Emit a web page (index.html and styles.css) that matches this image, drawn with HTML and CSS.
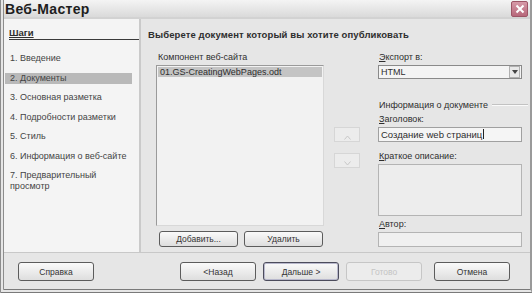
FILE: index.html
```html
<!DOCTYPE html>
<html lang="ru">
<head>
    <meta charset="UTF-8">
    <title>Веб-Мастер</title>
    <link rel="stylesheet" href="styles.css">
</head>
<body>
    <div class="window">
        <div class="titlebar">
            <span class="title">Веб-Мастер</span>
            <span class="close">
                <svg width="10" height="10" viewBox="0 0 10 10"><path d="M1.5 1.5 L8.5 8.5 M8.5 1.5 L1.5 8.5" stroke="#fff" stroke-width="2"/></svg>
            </span>
        </div>

        <div class="main">
            <div class="steps">
                <div class="steps-title"><u>Шаги</u></div>
                <ul class="step-list">
                    <li>1. Введение</li>
                    <li class="active">2. Документы</li>
                    <li>3. Основная разметка</li>
                    <li>4. Подробности разметки</li>
                    <li>5. Стиль</li>
                    <li>6. Информация о веб-сайте</li>
                    <li class="two-line">7. Предварительный<br>просмотр</li>
                </ul>
            </div>

            <div class="content">
                <div class="heading">Выберете документ который вы хотите опубликовать</div>

                <div class="columns">
                    <div class="col-list">
                        <div class="label">Компонент веб-сайта</div>
                        <div class="listbox">
                            <div class="list-item selected">01.GS-CreatingWebPages.odt</div>
                        </div>
                        <div class="list-buttons">
                            <button class="btn">Добавить...</button>
                            <button class="btn">Удалить</button>
                        </div>
                    </div>

                    <div class="col-arrows">
                        <button class="arrow">
                            <svg width="7" height="5" viewBox="0 0 7 5"><path d="M0.5 4.5 L3.5 1 L6.5 4.5" fill="none" stroke="#c8c8c8"/></svg>
                        </button>
                        <button class="arrow">
                            <svg width="7" height="5" viewBox="0 0 7 5"><path d="M0.5 0.5 L3.5 4 L6.5 0.5" fill="none" stroke="#c8c8c8"/></svg>
                        </button>
                    </div>

                    <div class="col-form">
                        <div class="label"><u>Э</u>кспорт в:</div>
                        <div class="select">
                            <span>HTML</span>
                            <span class="select-btn">
                                <svg width="6" height="4" viewBox="0 0 6 4"><path d="M0 0 L6 0 L3 4 Z" fill="#444"/></svg>
                            </span>
                        </div>

                        <div class="group-title"><span>Информация о документе</span></div>

                        <div class="label"><u>З</u>аголовок:</div>
                        <div class="input">Создание web страниц<span class="caret"></span></div>

                        <div class="label"><u>К</u>раткое описание:</div>
                        <div class="textarea"></div>

                        <div class="label"><u>А</u>втор:</div>
                        <div class="input author"></div>
                    </div>
                </div>
            </div>
        </div>

        <div class="footer">
            <button class="btn wide">Справка</button>
            <div class="nav">
                <button class="btn wide">&lt;Назад</button>
                <button class="btn wide default">Дальше &gt;</button>
                <button class="btn wide" disabled>Готово</button>
                <button class="btn wide cancel">Отмена</button>
            </div>
        </div>
    </div>
</body>
</html>
```

FILE: styles.css
```css
body {
    margin: 0;
    font-family: "Liberation Sans", Arial, sans-serif;
    font-size: 9px;
    color: #2e2e2e;
    background-color: #e6e6e6;
}

u {
    text-decoration: underline;
}

.window {
    width: 532px;
    height: 293px;
    box-sizing: border-box;
    border-left: 4px double #8c8c8c;
    border-right: 2px solid #9a9a9a;
    border-bottom: 4px double #7a7a7a;
    display: flex;
    flex-direction: column;
}

.titlebar {
    height: 17px;
    display: flex;
    align-items: center;
    justify-content: space-between;
    padding: 0 2px 0 1px;
    background: linear-gradient(#f4f4f4, #dadada);
    border-bottom: 2px solid #d2d2d2;
}

.title {
    font-size: 14px;
    font-weight: bold;
    color: #1e1e1e;
    letter-spacing: 0.3px;
}

.close {
    width: 15px;
    height: 14px;
    display: flex;
    align-items: center;
    justify-content: center;
    background: linear-gradient(#d69aa8, #b7677a);
    border: 1px solid #9d5566;
    border-radius: 2px;
}

.main {
    display: flex;
    height: 233px;
}

.steps {
    width: 134px;
    padding: 8px 0 0 1px;
    background-color: #f4f4f4;
    border-right: 2px solid #cacaca;
}

.steps-title {
    font-size: 9.5px;
    font-weight: bold;
    margin: 0 0 0 4px;
    padding-bottom: 1px;
    border-bottom: 1px solid #3a3a3a;
}

.step-list {
    list-style: none;
    margin: 13px 0 0;
    padding: 0;
    color: #444;
}

.step-list li {
    height: 11px;
    line-height: 11px;
    margin-bottom: 8.5px;
    padding-left: 5px;
    width: 122px;
    white-space: nowrap;
}

.step-list li.active {
    background-color: #b9b9b9;
}

.step-list li.two-line {
    height: 22px;
}

.content {
    flex: 1;
    padding: 10px 0 0 7px;
}

.heading {
    font-size: 9.5px;
    font-weight: bold;
    height: 13px;
    letter-spacing: 0.1px;
}

.columns {
    display: flex;
    margin-top: 10px;
}

.label {
    height: 11px;
    line-height: 11px;
    margin-bottom: 2px;
}

.col-list {
    width: 168px;
    margin-left: 8px;
}

.col-list .label {
    margin-left: 2px;
}

.listbox {
    height: 157px;
    background-color: #f2f2f2;
    border: 1px solid #9a9a9a;
    border-right-color: #d8d8d8;
    border-bottom-color: #d8d8d8;
    padding: 1px;
}

.list-item {
    height: 10px;
    line-height: 10px;
    padding-left: 2px;
}

.list-item.selected {
    background-color: #c4c4c4;
}

.list-buttons {
    display: flex;
    gap: 6px;
    margin-top: 5px;
    padding-left: 3px;
}

.list-buttons .btn {
    width: 79px;
    height: 16px;
}

.btn {
    font-family: inherit;
    font-size: 8.5px;
    color: #333;
    background: linear-gradient(#fafafa, #dedede);
    border: 1px solid #5c5c5c;
    border-radius: 3px;
    padding: 0;
}

.btn:disabled {
    color: #c4c4c4;
    border-color: #c6c6c6;
    background: #ececec;
}

.col-arrows {
    width: 26px;
    margin-left: 10px;
    padding-top: 75px;
    display: flex;
    flex-direction: column;
    gap: 11px;
}

.arrow {
    width: 26px;
    height: 15px;
    border: 1px solid #d6d6d6;
    background-color: #ececec;
    padding: 0;
}

.col-form {
    width: 144px;
    margin-left: 18px;
}

.col-form .label {
    padding-left: 1px;
}

.select {
    height: 12px;
    display: flex;
    justify-content: space-between;
    align-items: center;
    padding-left: 2px;
    background-color: #f4f4f4;
    border: 1px solid #8a8a8a;
}

.select-btn {
    width: 9px;
    height: 10px;
    margin-right: 1px;
    display: flex;
    align-items: center;
    justify-content: center;
    border: 1px solid #b0b0b0;
    background-color: #e8e8e8;
}

.group-title {
    display: flex;
    align-items: center;
    margin-top: 20px;
    margin-bottom: 4px;
    height: 11px;
    padding-left: 1px;
}

.group-title::after {
    content: "";
    flex: 1;
    margin: 0 -6px 0 4px;
    border-top: 1px solid #c2c2c2;
    border-bottom: 1px solid #fafafa;
}

.input {
    height: 13px;
    line-height: 13px;
    padding-left: 2px;
    background-color: #f5f5f5;
    border: 1px solid #a0a0a0;
    margin-bottom: 9px;
    font-size: 9.5px;
}

.caret {
    display: inline-block;
    width: 1px;
    height: 10px;
    margin-left: 1px;
    vertical-align: -1px;
    background-color: #222;
}

.textarea {
    height: 50px;
    background-color: #ededed;
    border: 1px solid #b4b4b4;
    margin-bottom: 3px;
}

.input.author {
    margin-bottom: 0;
    background-color: #f0f0f0;
    border-color: #b4b4b4;
}

.footer {
    flex: 1;
    display: flex;
    align-items: flex-start;
    padding: 9px 0 0 14px;
    border-top: 1px solid #c8c8c8;
}

.btn.wide {
    width: 76px;
    height: 19px;
}

.nav {
    display: flex;
    gap: 7px;
    margin-left: 86px;
}

.btn.default {
    border-color: #4c4c5c;
    box-shadow: inset 0 0 0 1px #b8b8cc;
}

.btn.cancel {
    margin-left: 5px;
}
```
